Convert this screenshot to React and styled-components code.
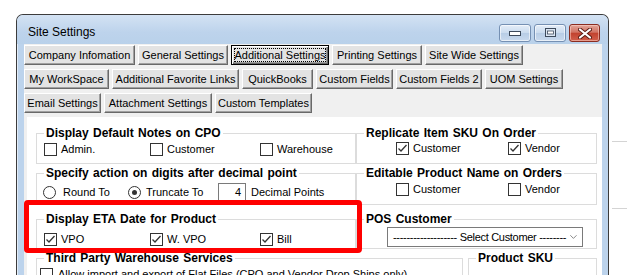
import React from "react";
import styled, { createGlobalStyle } from "styled-components";

const GlobalStyle = createGlobalStyle`
  html, body {
    margin: 0;
    background: #fff;
    overflow: hidden;
  }
  body {
    font-family: "Liberation Sans", Arial, sans-serif;
    font-size: 11px;
    color: #000;
  }
`;

const tabRows = [
  [
    { label: "Company Infomation", w: 111 },
    { label: "General Settings", w: 90 },
    { label: "Additional Settings", w: 98, focused: true },
    { label: "Printing Settings", w: 90 },
    { label: "Site Wide Settings", w: 98 },
  ],
  [
    { label: "My WorkSpace", w: 85 },
    { label: "Additional Favorite Links", w: 127 },
    { label: "QuickBooks", w: 71 },
    { label: "Custom Fields", w: 77 },
    { label: "Custom Fields 2", w: 86 },
    { label: "UOM Settings", w: 78 },
  ],
  [
    { label: "Email Settings", w: 77 },
    { label: "Attachment Settings", w: 108 },
    { label: "Custom Templates", w: 97 },
  ],
];

const CheckBox = ({ checked }) => (
  <Box>
    {checked && (
      <svg width="11" height="11" viewBox="0 0 11 11">
        <path d="M1.5 5.5 L4 8 L9.5 2" fill="none" stroke="#333" strokeWidth="1.3" />
      </svg>
    )}
  </Box>
);

const Option = ({ checked, children }) => (
  <Item>
    <CheckBox checked={checked} />
    <span>{children}</span>
  </Item>
);

const App = () => {
  return (
    <>
      <GlobalStyle />
      <Page>
        <Window>
          <TitleBar>
            <TitleText>Site Settings</TitleText>
            <Caption>
              <CapButton>
                <svg width="12" height="6" viewBox="0 0 12 6">
                  <rect x="0.5" y="0.5" width="11" height="4" fill="#fff" stroke="#3d4a5c" />
                </svg>
              </CapButton>
              <CapButton>
                <svg width="11" height="9" viewBox="0 0 11 9">
                  <rect x="0.5" y="0.5" width="10" height="8" fill="#dbe6f3" stroke="#3d4a5c" />
                  <rect x="2.5" y="3" width="6" height="3" fill="#fff" stroke="#3d4a5c" strokeWidth="0.8" />
                </svg>
              </CapButton>
              <CloseButton>
                <svg width="14" height="11" viewBox="0 0 14 11">
                  <path d="M2 1.5 L12 9.5 M12 1.5 L2 9.5" stroke="#5a1a12" strokeWidth="4" strokeLinecap="round" />
                  <path d="M2 1.5 L12 9.5 M12 1.5 L2 9.5" stroke="#fff" strokeWidth="2.2" strokeLinecap="round" />
                </svg>
              </CloseButton>
            </Caption>
          </TitleBar>

          <Client>
            <Toolbar>
              {tabRows.map((row, i) => (
                <ButtonRow key={i}>
                  {row.map((b) => (
                    <TabButton key={b.label} $w={b.w} $focused={b.focused}>
                      {b.label}
                    </TabButton>
                  ))}
                </ButtonRow>
              ))}
            </Toolbar>

            <Panel>
              <GroupRow $cols="320px 241px" $h={40}>
                <Group $h={38}>
                  <Legend>Display Default Notes on CPO</Legend>
                  <Options $cols="106px 110px auto" $pl={7} $mt={2}>
                    <Option>Admin.</Option>
                    <Option>Customer</Option>
                    <Option>Warehouse</Option>
                  </Options>
                </Group>
                <Group $h={38}>
                  <Legend>Replicate Item SKU On Order</Legend>
                  <Options $cols="112px auto" $pl={39} $mt={1}>
                    <Option checked>Customer</Option>
                    <Option checked>Vendor</Option>
                  </Options>
                </Group>
              </GroupRow>

              <GroupRow $cols="320px 241px" $h={46}>
                <Group $h={39}>
                  <Legend>Specify action on digits after decimal point</Legend>
                  <Options $cols="85px 90px auto" $pl={6} $mt={2} $rh={19}>
                    <Item $gap={7}>
                      <Radio />
                      <span>Round To</span>
                    </Item>
                    <Item $gap={5}>
                      <Radio $on />
                      <span>Truncate To</span>
                    </Item>
                    <Item $gap={5}>
                      <NumberBox>4</NumberBox>
                      <span>Decimal Points</span>
                    </Item>
                  </Options>
                </Group>
                <Group $h={39}>
                  <Legend>Editable Product Name on Orders</Legend>
                  <Options $cols="112px auto" $pl={39} $mt={2}>
                    <Option>Customer</Option>
                    <Option>Vendor</Option>
                  </Options>
                </Group>
              </GroupRow>

              <GroupRow $cols="320px 241px" $h={39}>
                <Group $h={37}>
                  <Legend>Display ETA Date for Product</Legend>
                  <Options $cols="106px 110px auto" $pl={7} $mt={6}>
                    <Option checked>VPO</Option>
                    <Option checked>W. VPO</Option>
                    <Option checked>Bill</Option>
                  </Options>
                </Group>
                <Group $h={37}>
                  <Legend>POS Customer</Legend>
                  <Options $cols="auto" $pl={30} $mt={0} $rh={20}>
                    <Select>
                      <SelectText>------------------- Select Customer --------</SelectText>
                      <svg width="10" height="6" viewBox="0 0 10 6">
                        <path d="M0.5 0.5 L5 5 L9.5 0.5" fill="none" stroke="#555" />
                      </svg>
                    </Select>
                  </Options>
                </Group>
              </GroupRow>

              <GroupRow $cols="427px 129px" $gap={5} $h={60}>
                <Group $h={60}>
                  <Legend>Third Party Warehouse Services</Legend>
                  <Options $cols="auto" $pl={3} $mt={2}>
                    <Item $gap={5}>
                      <CheckBox />
                      <span>Allow import and export of Flat Files (CPO and Vendor Drop Ships only)</span>
                    </Item>
                  </Options>
                </Group>
                <Group $h={60}>
                  <Legend>Product SKU</Legend>
                </Group>
              </GroupRow>
            </Panel>

            <Highlight />
          </Client>
        </Window>

        <Backdrop>
          <Rule $mt={127} />
          <Rule $mt={66} />
        </Backdrop>
      </Page>
    </>
  );
};

const Page = styled.div`
  display: flex;
  align-items: flex-start;
  height: 275px;
  padding: 14px 0 0 16px;
  box-sizing: border-box;
  overflow: hidden;
`;

const Window = styled.div`
  width: 593px;
  height: 300px;
  box-sizing: border-box;
  display: flex;
  flex-direction: column;
  border: 1px solid #3c3c3c;
  border-bottom: none;
  border-radius: 7px 7px 0 0;
  background: #bcd3ec;
  padding: 0 6px 0 7px;
  box-shadow: inset 1px 1px 0 #e3edf8;
`;

const TitleBar = styled.div`
  height: 29px;
  margin: 0 -6px 0 -7px;
  padding: 0 8px 2px 11px;
  box-sizing: border-box;
  display: flex;
  align-items: flex-end;
  justify-content: space-between;
  border-radius: 6px 6px 0 0;
  background: linear-gradient(#d3e2f3, #bdd3ec 60%, #b9d1ea);
`;

const TitleText = styled.div`
  font-size: 12px;
  line-height: 15px;
  margin-bottom: 2px;
  color: #000;
`;

const Caption = styled.div`
  display: flex;
  gap: 3px;
`;

const CapButton = styled.div`
  width: 32px;
  height: 18px;
  box-sizing: border-box;
  display: flex;
  align-items: flex-end;
  justify-content: center;
  padding-bottom: 4px;
  border: 1px solid #7590b3;
  border-radius: 3px;
  background: linear-gradient(#e4edf8, #cbdcef 48%, #b8cde6 52%, #c9daee);
  box-shadow: inset 0 0 0 1px rgba(255, 255, 255, 0.6);
`;

const CloseButton = styled(CapButton)`
  width: 31px;
  align-items: center;
  padding-bottom: 0;
  border-color: #8a2c20;
  background: linear-gradient(#e2a598, #d27363 45%, #c2432f 52%, #d2604d);
  box-shadow: inset 0 0 0 1px rgba(255, 220, 210, 0.5);
`;

const Client = styled.div`
  position: relative;
  flex: 1;
  display: flex;
  flex-direction: column;
  background: #f0f0f0;
  padding-top: 1px;
`;

const Toolbar = styled.div`
  display: flex;
  flex-direction: column;
  gap: 4px;
`;

const ButtonRow = styled.div`
  display: flex;
  gap: 3px;
`;

const TabButton = styled.button`
  width: ${(p) => p.$w}px;
  height: 20px;
  padding: 0;
  box-sizing: border-box;
  font-family: "Liberation Sans", Arial, sans-serif;
  font-size: 11px;
  color: #000;
  white-space: nowrap;
  background: #e3e3e3;
  border: 1px solid;
  border-color: #fff #696969 #696969 #fff;
  box-shadow: inset -1px -1px 0 #a0a0a0;
  ${(p) =>
    p.$focused &&
    `
    border-color: #000;
    box-shadow: inset 1px 1px 0 #fff, inset -1px -1px 0 #696969, inset -2px -2px 0 #a0a0a0;
    outline: 1px dotted #000;
    outline-offset: -4px;
  `}
`;

const Panel = styled.div`
  flex: 1;
  margin: 4px 0 0 3px;
  padding: 9px 0 0 9px;
  background: #fff;
  display: flex;
  flex-direction: column;
`;

const GroupRow = styled.div`
  display: grid;
  grid-template-columns: ${(p) => p.$cols};
  column-gap: ${(p) => p.$gap || 0}px;
  height: ${(p) => p.$h}px;
  align-items: start;
  flex-shrink: 0;
`;

const Group = styled.fieldset`
  margin: 0;
  padding: 0;
  min-width: 0;
  height: ${(p) => p.$h}px;
  box-sizing: border-box;
  border: 1px solid #dcdcdc;
`;

const Legend = styled.legend`
  margin-left: 7px;
  padding: 0 2px;
  font-size: 12px;
  font-weight: bold;
  line-height: 15px;
  word-spacing: 1px;
  color: #000;
`;

const Options = styled.div`
  display: grid;
  grid-template-columns: ${(p) => p.$cols};
  align-items: center;
  height: ${(p) => p.$rh || 13}px;
  margin-top: ${(p) => p.$mt}px;
  padding-left: ${(p) => p.$pl}px;
`;

const Item = styled.div`
  display: flex;
  align-items: center;
  gap: ${(p) => p.$gap || 4}px;
  white-space: nowrap;
  line-height: 13px;
`;

const Box = styled.span`
  width: 13px;
  height: 13px;
  box-sizing: border-box;
  flex-shrink: 0;
  display: flex;
  align-items: center;
  justify-content: center;
  border: 1px solid #333;
  background: #fff;
`;

const Radio = styled.span`
  width: 13px;
  height: 13px;
  box-sizing: border-box;
  flex-shrink: 0;
  border: 1px solid #333;
  border-radius: 50%;
  background: #fff;
  display: flex;
  align-items: center;
  justify-content: center;
  &::after {
    content: "";
    width: 5px;
    height: 5px;
    border-radius: 50%;
    background: ${(p) => (p.$on ? "#333" : "transparent")};
  }
`;

const NumberBox = styled.span`
  width: 28px;
  height: 19px;
  box-sizing: border-box;
  border: 1px solid #7a7a7a;
  background: #fff;
  text-align: right;
  padding-right: 4px;
  line-height: 17px;
`;

const Select = styled.div`
  width: 196px;
  height: 20px;
  box-sizing: border-box;
  display: flex;
  align-items: center;
  justify-content: space-between;
  gap: 4px;
  padding: 0 5px 0 5px;
  border: 1px solid #7a7a7a;
  background: #fff;
`;

const SelectText = styled.span`
  white-space: nowrap;
  letter-spacing: -0.3px;
  font-size: 11px;
`;

const Highlight = styled.div`
  position: absolute;
  left: 0;
  top: 156px;
  width: 338px;
  height: 53px;
  box-sizing: border-box;
  border: 5px solid #f00;
  border-radius: 4px;
  pointer-events: none;
`;

const Backdrop = styled.div`
  display: flex;
  flex-direction: column;
  padding-left: 3px;
`;

const Rule = styled.div`
  width: 15px;
  height: 1px;
  margin-top: ${(p) => p.$mt}px;
  background: #d4d4d4;
`;

export default App;
